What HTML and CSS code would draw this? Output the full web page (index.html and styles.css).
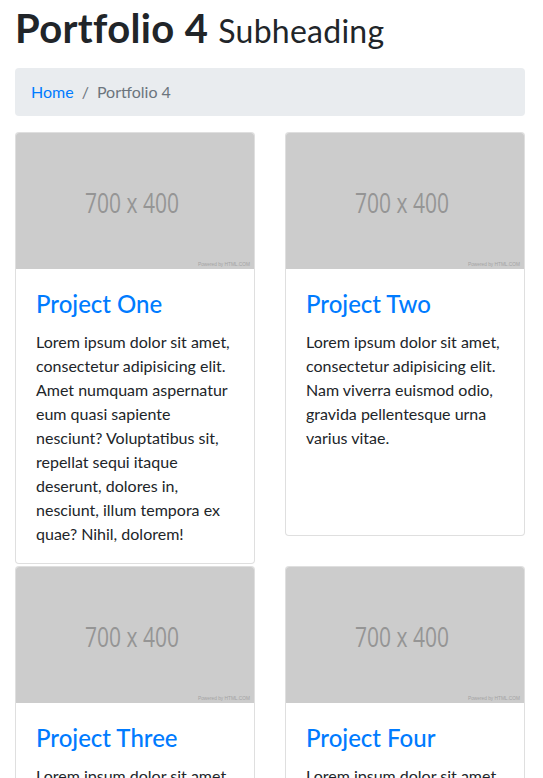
FILE: index.html
```html
<!DOCTYPE html>
<html lang="en">
<head>
<meta charset="utf-8">
<title>Portfolio 4</title>
<link rel="stylesheet" href="styles.css">
</head>
<body>
<div class="container">
  <h1 class="page-title">Portfolio 4 <small>Subheading</small></h1>
  <ol class="breadcrumb">
    <li class="crumb"><a href="#">Home</a></li>
    <li class="crumb active">Portfolio 4</li>
  </ol>
  <div class="grid">
    <div class="card card-a">
      <svg class="thumb" viewBox="0 0 238 136" width="238" height="136"><rect width="238" height="136" fill="#cccccc"/><text x="69" y="79.5" class="ph" textLength="94" lengthAdjust="spacingAndGlyphs">700 x 400</text><text x="182" y="133.4" class="pw" textLength="52" lengthAdjust="spacingAndGlyphs">Powered by HTML.COM</text></svg>
      <div class="card-body">
        <h4 class="card-title"><a href="#">Project One</a></h4>
        <p class="card-text">Lorem ipsum dolor sit amet, consectetur adipisicing elit. Amet numquam aspernatur eum quasi sapiente nesciunt? Voluptatibus sit, repellat sequi itaque deserunt, dolores in, nesciunt, illum tempora ex quae? Nihil, dolorem!</p>
      </div>
    </div>
    <div class="card card-b">
      <svg class="thumb" viewBox="0 0 238 136" width="238" height="136"><rect width="238" height="136" fill="#cccccc"/><text x="69" y="79.5" class="ph" textLength="94" lengthAdjust="spacingAndGlyphs">700 x 400</text><text x="182" y="133.4" class="pw" textLength="52" lengthAdjust="spacingAndGlyphs">Powered by HTML.COM</text></svg>
      <div class="card-body">
        <h4 class="card-title"><a href="#">Project Two</a></h4>
        <p class="card-text">Lorem ipsum dolor sit amet, consectetur adipisicing elit. Nam viverra euismod odio, gravida pellentesque urna varius vitae.</p>
      </div>
    </div>
    <div class="card">
      <svg class="thumb" viewBox="0 0 238 136" width="238" height="136"><rect width="238" height="136" fill="#cccccc"/><text x="69" y="79.5" class="ph" textLength="94" lengthAdjust="spacingAndGlyphs">700 x 400</text><text x="182" y="133.4" class="pw" textLength="52" lengthAdjust="spacingAndGlyphs">Powered by HTML.COM</text></svg>
      <div class="card-body">
        <h4 class="card-title"><a href="#">Project Three</a></h4>
        <p class="card-text">Lorem ipsum dolor sit amet, consectetur adipisicing elit. Amet numquam aspernatur eum quasi sapiente nesciunt? Voluptatibus sit, repellat sequi itaque deserunt, dolores in, nesciunt, illum tempora ex quae? Nihil, dolorem!</p>
      </div>
    </div>
    <div class="card">
      <svg class="thumb" viewBox="0 0 238 136" width="238" height="136"><rect width="238" height="136" fill="#cccccc"/><text x="69" y="79.5" class="ph" textLength="94" lengthAdjust="spacingAndGlyphs">700 x 400</text><text x="182" y="133.4" class="pw" textLength="52" lengthAdjust="spacingAndGlyphs">Powered by HTML.COM</text></svg>
      <div class="card-body">
        <h4 class="card-title"><a href="#">Project Four</a></h4>
        <p class="card-text">Lorem ipsum dolor sit amet, consectetur adipisicing elit. Nam viverra euismod odio, gravida pellentesque urna varius vitae.</p>
      </div>
    </div>
  </div>
</div>
</body>
</html>
```
FILE: styles.css
```css
* { box-sizing: border-box; }
html, body { margin: 0; padding: 0; background: #fff; }
body {
  font-family: Lato, "Noto Sans", sans-serif;
  font-size: 16px;
  line-height: 1.5;
  color: #212529;
}
a { color: #007bff; text-decoration: none; }
.container { padding: 0 15px; width: 540px; }
.page-title {
  margin: 4px 0 16px;
  font-size: 40px;
  font-weight: 700;
  line-height: 1.2;
  letter-spacing: 0.35px;
  color: #212529;
}
.page-title small {
  font-size: 32px;
  font-weight: 400;
  letter-spacing: 0.25px;
}
.breadcrumb {
  display: flex;
  list-style: none;
  margin: 0 0 16px;
  padding: 12px 16px;
  width: 510px;
  background: #e9ecef;
  border-radius: 4px;
}
.crumb + .crumb { padding-left: 8px; }
.crumb + .crumb::before {
  content: "/";
  padding-right: 8px;
  color: #6c757d;
}
.crumb.active { color: #6c757d; }
.grid {
  display: grid;
  grid-template-columns: 240px 240px;
  column-gap: 30px;
  row-gap: 2px;
  align-items: start;
}
.card {
  display: flex;
  flex-direction: column;
  border: 1px solid rgba(0, 0, 0, 0.125);
  border-radius: 4px;
  background: #fff;
}
.card-a { height: 432px; }
.card-b { height: 404px; }
.thumb {
  display: block;
  flex-shrink: 0;
  width: 238px;
  height: 136px;
  border-radius: 3px 3px 0 0;
}
.ph {
  font-family: "Open Sans", sans-serif;
  font-size: 28px;
  fill: #959595;
}
.pw {
  font-family: "Liberation Sans", sans-serif;
  font-size: 5px;
  fill: #a3a3a3;
}
.card-body { padding: 21px 20px 20px; flex-shrink: 0; }
.card-title {
  margin: 0 0 11px;
  font-size: 24px;
  font-weight: 500;
  line-height: 1.2;
}
.card-text { margin: 0; }
```
